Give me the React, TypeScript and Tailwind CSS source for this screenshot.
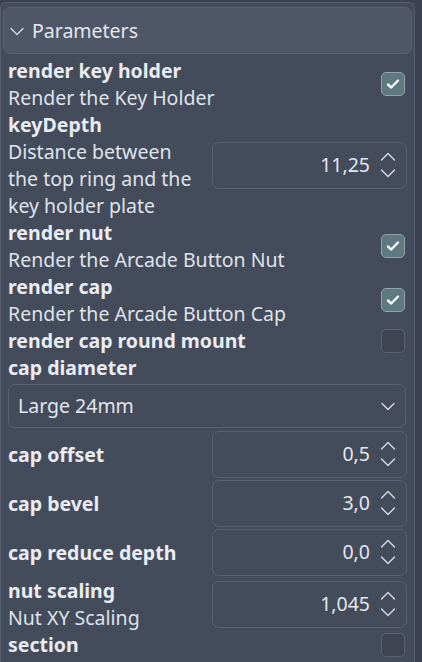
import React from "react";

const font = { fontFamily: '"Noto Sans", "Open Sans", sans-serif' };

const Check = ({ on }: { on: boolean }) =>
  on ? (
    <div className="flex h-[24px] w-[24px] items-center justify-center rounded-[5px] border border-[#8fa4aa] bg-[#5f7981]">
      <svg width="16" height="16" viewBox="0 0 16 16" fill="none">
        <path d="M3 8.5l3.2 3L13 4.5" stroke="#f4f6f8" strokeWidth="2.4" strokeLinecap="round" strokeLinejoin="round" />
      </svg>
    </div>
  ) : (
    <div className="h-[24px] w-[24px] rounded-[5px] border border-[#5a6171] bg-[#3e4452]" />
  );

const Spin = ({ value }: { value: string }) => (
  <div className="flex h-[47px] w-[195px] shrink-0 items-center justify-end rounded-[7px] border border-[#586072] pr-[10px]">
    <span className="text-[19.5px] text-[#e3e6ec]">{value}</span>
    <svg className="ml-[10px]" width="16" height="30" viewBox="0 0 16 30" fill="none">
      <path d="M1.5 10L8 3.5L14.5 10" stroke="#d8dce3" strokeWidth="1.4" strokeLinecap="round" strokeLinejoin="round" />
      <path d="M1.5 20L8 26.5L14.5 20" stroke="#d8dce3" strokeWidth="1.4" strokeLinecap="round" strokeLinejoin="round" />
    </svg>
  </div>
);

const Label = ({ title, desc }: { title: string; desc?: string }) => (
  <div className="min-w-0 flex-1">
    <div className="text-[19.5px] font-bold leading-[27px] text-[#e9ecf1]">{title}</div>
    {desc && <div className="text-[19.5px] leading-[27px] text-[#dfe3ea]">{desc}</div>}
  </div>
);

const CheckRow = ({ title, desc, on }: { title: string; desc?: string; on: boolean }) => (
  <div className="flex items-center pr-[9px]">
    <Label title={title} desc={desc} />
    <Check on={on} />
  </div>
);

const SpinRow = ({ title, desc, value }: { title: string; desc?: string; value: string }) => (
  <div className="flex min-h-[48px] items-center gap-[6px] pr-[7px]">
    <Label title={title} desc={desc} />
    <Spin value={value} />
  </div>
);

export default function App() {
  return (
    <div className="flex h-[662px] w-[422px] overflow-hidden bg-[#3b4150]" style={font}>
      <div className="mt-[2px] flex w-[415px] flex-col rounded-t-[6px] border border-b-0 border-[#575e6e] bg-[#444b5b] pl-[2px]">
        <div className="mt-[4px] mr-[2px] flex h-[47px] items-center rounded-[7px] border border-[#596074] bg-[#4f5667] pl-[5px]">
          <svg width="16" height="16" viewBox="0 0 16 16" fill="none">
            <path d="M2 5.5L8 11.5L14 5.5" stroke="#d9dde4" strokeWidth="1.3" strokeLinecap="round" strokeLinejoin="round" />
          </svg>
          <span className="ml-[7px] text-[19.5px] text-[#e3e6ec]">Parameters</span>
        </div>
        <div className="mt-[3px] flex flex-col pl-[5px]">
          <CheckRow title="render key holder" desc="Render the Key Holder" on />
          <div className="flex items-center justify-between pr-[7px]">
            <div className="w-[188px] shrink-0">
              <div className="text-[19.5px] font-bold leading-[27px] text-[#e9ecf1]">keyDepth</div>
              <div className="text-[19.5px] leading-[27px] text-[#dfe3ea]">Distance between the top ring and the key holder plate</div>
            </div>
            <Spin value="11,25" />
          </div>
          <CheckRow title="render nut" desc="Render the Arcade Button Nut" on />
          <CheckRow title="render cap" desc="Render the Arcade Button Cap" on />
          <CheckRow title="render cap round mount" on={false} />
          <Label title="cap diameter" />
          <div className="mt-[3px] mr-[8px] flex h-[44px] items-center justify-between rounded-[7px] border border-[#586072] pl-[9px] pr-[9px]">
            <span className="text-[19.5px] text-[#e3e6ec]">Large 24mm</span>
            <svg width="16" height="16" viewBox="0 0 16 16" fill="none">
              <path d="M2 5.5L8 11.5L14 5.5" stroke="#d9dde4" strokeWidth="1.3" strokeLinecap="round" strokeLinejoin="round" />
            </svg>
          </div>
          <div className="mt-[2px] flex flex-col gap-[1px]">
            <SpinRow title="cap offset" value="0,5" />
            <SpinRow title="cap bevel" value="3,0" />
            <SpinRow title="cap reduce depth" value="0,0" />
            <SpinRow title="nut scaling" desc="Nut XY Scaling" value="1,045" />
          </div>
          <CheckRow title="section" on={false} />
        </div>
      </div>
    </div>
  );
}
